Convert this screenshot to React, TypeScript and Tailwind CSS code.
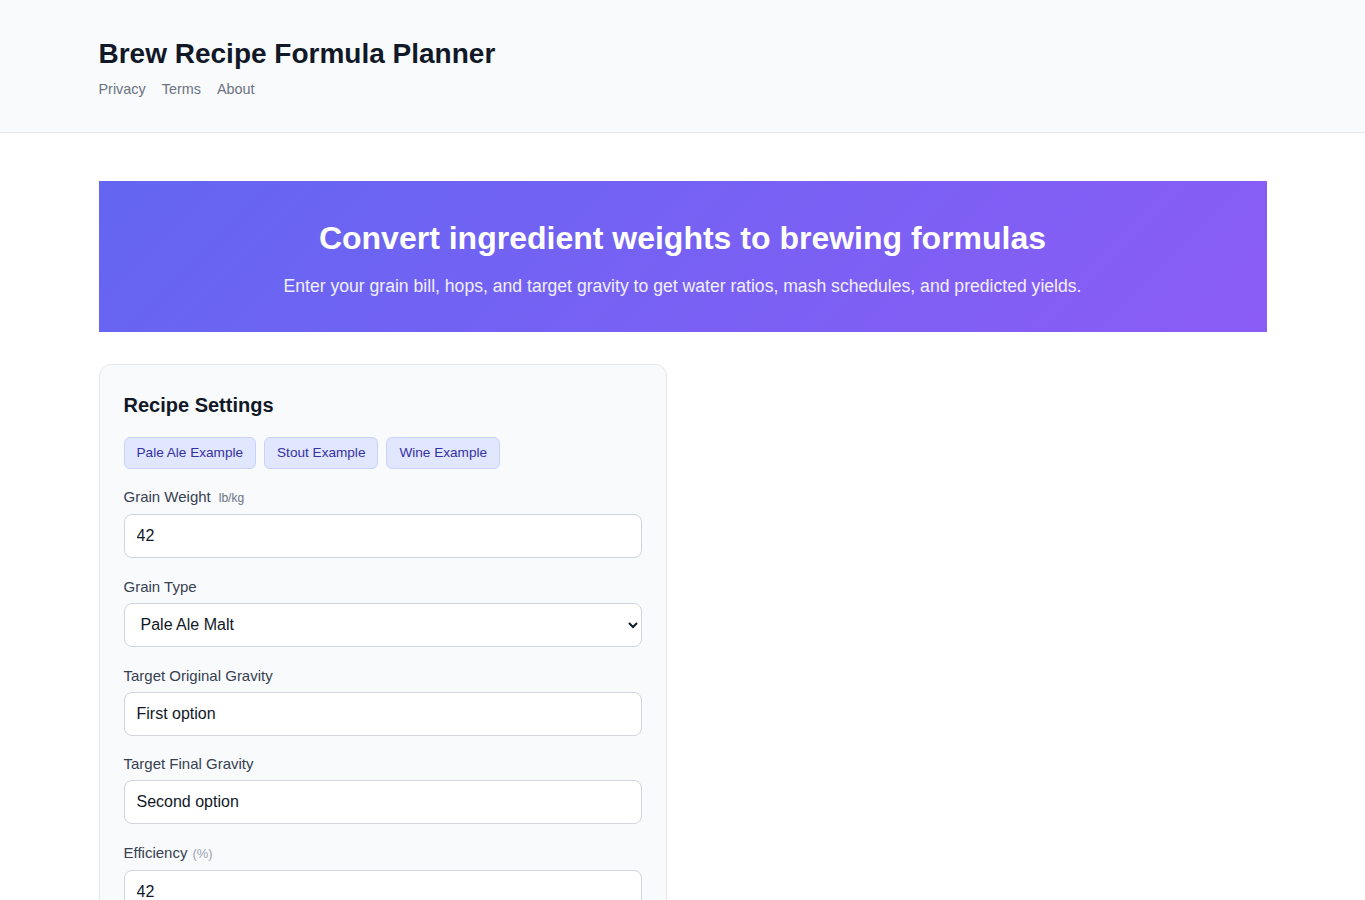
import React from "react";

const font = { fontFamily: '"Liberation Sans", Arial, sans-serif' };

function Label({ text, unit, unitParen }: { text: string; unit?: string; unitParen?: string }) {
  return (
    <label className="block text-[15px] leading-5 text-[#374151] mb-[6px]">
      {text}
      {unit && <span className="ml-[8px] text-[12px] text-[#6b7280]">{unit}</span>}
      {unitParen && <span className="ml-[5px] text-[13px] text-[#9ca3af]">{unitParen}</span>}
    </label>
  );
}

export default function App() {
  return (
    <div style={font} className="min-h-screen bg-white text-[#111827]">
      <header className="bg-[#f8fafc] border-b border-[#e5e7eb]">
        <div className="max-w-[1200px] mx-auto px-4 pt-8 pb-8">
          <h1 className="text-[28px] leading-[42px] font-bold text-[#111827] translate-y-px">Brew Recipe Formula Planner</h1>
          <nav className="mt-1 flex gap-4 text-[14.4px] leading-[22px] text-[#6b7280]">
            <a>Privacy</a>
            <a>Terms</a>
            <a>About</a>
          </nav>
        </div>
      </header>
      <main className="max-w-[1200px] mx-auto px-4 pt-12">
        <section className="bg-[linear-gradient(135deg,#6366f1_0%,#8b5cf6_100%)] text-white text-center pt-[38px] pb-[32px] px-6">
          <h2 className="text-[32px] leading-[38px] font-bold">Convert ingredient weights to brewing formulas</h2>
          <p className="mt-[16px] text-[17.6px] leading-[27px] text-white/90">
            Enter your grain bill, hops, and target gravity to get water ratios, mash schedules, and predicted yields.
          </p>
        </section>
        <div className="grid grid-cols-2 gap-8 mt-8">
          <div className="bg-[#f8fafc] border border-[#e5e7eb] rounded-xl p-6 pb-10">
            <h3 className="text-[20px] leading-[32px] font-bold text-[#111827]">Recipe Settings</h3>
            <div className="flex gap-2 mt-4 mb-[18px]">
              {["Pale Ale Example", "Stout Example", "Wine Example"].map((t) => (
                <button
                  key={t}
                  className="h-8 px-3 rounded-md bg-[#e0e7ff] border border-[#c7d2fe] text-[13.6px] text-[#3730a3]"
                >
                  {t}
                </button>
              ))}
            </div>
            <div className="flex flex-col gap-[18.8px]">
              <div>
                <Label text="Grain Weight" unit="lb/kg" />
                <input
                  defaultValue="42"
                  className="w-full h-[44px] px-3 bg-white border border-[#d1d5db] rounded-lg text-[16px] text-[#111827]"
                />
              </div>
              <div>
                <Label text="Grain Type" />
                <select
                  defaultValue="pale"
                  className="w-full h-[44px] px-3 bg-white border border-[#d1d5db] rounded-lg text-[16px] text-[#111827]"
                >
                  <option value="pale">Pale Ale Malt</option>
                  <option value="stout">Roasted Barley</option>
                </select>
              </div>
              <div>
                <Label text="Target Original Gravity" />
                <input
                  defaultValue="First option"
                  className="w-full h-[44px] px-3 bg-white border border-[#d1d5db] rounded-lg text-[16px] text-[#111827]"
                />
              </div>
              <div>
                <Label text="Target Final Gravity" />
                <input
                  defaultValue="Second option"
                  className="w-full h-[44px] px-3 bg-white border border-[#d1d5db] rounded-lg text-[16px] text-[#111827]"
                />
              </div>
              <div>
                <Label text="Efficiency" unitParen="(%)" />
                <input
                  defaultValue="42"
                  className="w-full h-[44px] px-3 bg-white border border-[#d1d5db] rounded-lg text-[16px] text-[#111827]"
                />
              </div>
            </div>
          </div>
          <div />
        </div>
      </main>
    </div>
  );
}
